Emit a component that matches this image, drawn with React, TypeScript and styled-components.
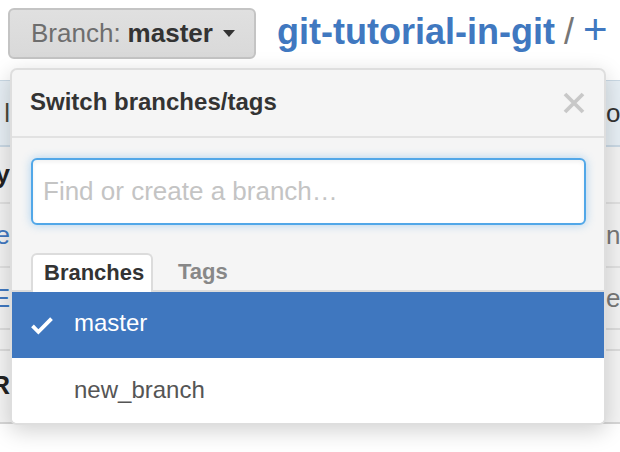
import React from "react";
import styled, { createGlobalStyle } from "styled-components";

const GlobalStyle = createGlobalStyle`
  html, body { margin: 0; padding: 0; background: #fff; }
  body { font-family: "Liberation Sans", Arial, Helvetica, sans-serif; }
  * { box-sizing: border-box; }
`;

const Page = styled.div`
  position: relative;
  width: 620px;
  height: 452px;
  overflow: hidden;
  background: #fff;
`;

const TopBar = styled.div`
  display: flex;
  align-items: center;
  gap: 21px;
  padding: 8px 0 0 8px;
  height: 59px;
`;

const BranchButton = styled.button`
  display: flex;
  align-items: center;
  width: 248px;
  height: 51px;
  padding: 0 0 0 21px;
  border: 2px solid #c4c4c4;
  border-radius: 6px;
  background: linear-gradient(#e0e0e0, #d9d9d9);
  font-family: inherit;
  font-size: 26px;
  color: #6e6e6e;
  white-space: nowrap;
`;

const Strong = styled.strong`
  color: #333;
  font-weight: 700;
  margin-left: 7px;
`;

const Caret = styled.span`
  display: inline-block;
  margin-left: 10px;
  width: 0;
  height: 0;
  border-top: 7px solid #333;
  border-left: 6.5px solid transparent;
  border-right: 6.5px solid transparent;
`;

const Title = styled.h1`
  display: flex;
  align-items: baseline;
  margin: -6px 0 0 0;
  font-size: 36px;
  line-height: 40px;
  font-weight: 700;
  color: #4078c0;
  white-space: nowrap;
`;

const Slash = styled.span`
  font-weight: 400;
  color: #767676;
  margin: 0 10px 0 9px;
`;

const Plus = styled.span`
  font-weight: 400;
  font-size: 42px;
  color: #4078c0;
  margin-left: -1px;
`;

const FileBox = styled.div`
  margin: 21px 0 0 -20px;
  width: 660px;
  border-top: 1px solid #c9d8e4;
  border-bottom: 2px solid #d6d6d6;
`;

const Row = styled.div<{ $h: number; $bg: string; $line: string }>`
  display: flex;
  align-items: center;
  height: ${(p) => p.$h}px;
  background: ${(p) => p.$bg};
  border-bottom: 2px solid ${(p) => p.$line};
  font-size: 26px;
`;

const LeftCell = styled.div<{ $color: string; $bold?: boolean }>`
  width: 30px;
  display: flex;
  justify-content: flex-end;
  overflow: hidden;
  white-space: nowrap;
  color: ${(p) => p.$color};
  font-weight: ${(p) => (p.$bold ? 700 : 400)};
`;

const Middle = styled.div`
  flex: 0 0 596px;
`;

const RightCell = styled.div<{ $color: string }>`
  flex: 1;
  white-space: nowrap;
  overflow: hidden;
  color: ${(p) => p.$color};
`;

const Dropdown = styled.div`
  position: absolute;
  left: 10px;
  top: 68px;
  width: 596px;
  height: 357px;
  display: flex;
  flex-direction: column;
  background: #f5f5f5;
  border: 2px solid #dedede;
  border-radius: 7px;
  overflow: hidden;
  box-shadow: 0 6px 22px rgba(0, 0, 0, 0.18);
`;

const Header = styled.div`
  display: flex;
  align-items: center;
  justify-content: space-between;
  height: 68px;
  padding: 0 19px 0 18px;
  border-bottom: 2px solid #e2e2e2;
  flex-shrink: 0;
`;

const HeaderTitle = styled.span`
  font-size: 24px;
  font-weight: 700;
  color: #333;
  margin-top: -2px;
`;

const CloseIcon = styled.svg`
  width: 22px;
  height: 22px;
  display: block;
`;

const FilterArea = styled.div`
  padding: 20px 19px 0 19px;
`;

const FilterInput = styled.input`
  display: block;
  width: 555px;
  height: 67px;
  padding: 0 10px;
  border: 2px solid #51a7e8;
  border-radius: 6px;
  background: #fff;
  outline: none;
  font-family: inherit;
  font-size: 26px;
  color: #333;
  box-shadow: 0 0 10px rgba(81, 167, 232, 0.45), inset 0 2px 4px rgba(0, 0, 0, 0.06);
  &::placeholder { color: #c4c4c4; }
`;

const Tabs = styled.div`
  display: flex;
  align-items: flex-end;
  margin-top: 28px;
  padding-left: 19px;
  height: 39px;
  border-bottom: 2px solid #dcdcdc;
  flex-shrink: 0;
`;

const Tab = styled.div<{ $active?: boolean }>`
  display: flex;
  align-items: center;
  height: ${(p) => (p.$active ? "39px" : "37px")};
  padding: 0 11px 2px;
  margin-bottom: ${(p) => (p.$active ? "-2px" : "0")};
  font-size: 22px;
  font-weight: 700;
  color: ${(p) => (p.$active ? "#333" : "#888")};
  background: ${(p) => (p.$active ? "#fff" : "transparent")};
  border: 2px solid ${(p) => (p.$active ? "#dcdcdc" : "transparent")};
  border-bottom: none;
  border-radius: 6px 6px 0 0;
  width: ${(p) => (p.$active ? "122px" : "auto")};
  margin-right: ${(p) => (p.$active ? "12px" : "0")};
`;

const List = styled.div`
  flex: 1;
  display: flex;
  flex-direction: column;
  background: #fff;
`;

const Item = styled.div<{ $selected?: boolean }>`
  display: flex;
  align-items: center;
  height: ${(p) => (p.$selected ? "66px" : "67px")};
  padding-left: 19px;
  background: ${(p) => (p.$selected ? "#3f77bf" : "#fff")};
  color: ${(p) => (p.$selected ? "#fff" : "#555")};
  font-size: 24px;
`;

const CheckSlot = styled.span`
  width: 43px;
  display: flex;
  align-items: center;
`;

const CheckIcon = styled.svg`
  width: 22px;
  height: 29px;
  display: block;
  margin-top: 1px;
`;

const ItemText = styled.span`
  margin-top: -4px;
`;

const rows = [
  { h: 66, bg: "#e6eef4", line: "#c9d8e4", left: "l", lc: "#4a4a3a", right: "os", rc: "#333" },
  { h: 57, bg: "#f2f2f2", line: "#e0e0e0", left: "y", lc: "#222", bold: true, right: "", rc: "#333" },
  { h: 64, bg: "#f2f2f2", line: "#e0e0e0", left: "ie", lc: "#4078c0", right: "n-", rc: "#777" },
  { h: 62, bg: "#f2f2f2", line: "#dcdcdc", left: "E", lc: "#4078c0", right: "en", rc: "#777" },
  { h: 21, bg: "#f2f2f2", line: "#dcdcdc", left: "", lc: "#333", right: "", rc: "#333" },
  { h: 71, bg: "#f4f4f4", line: "#f4f4f4", left: "R", lc: "#222", bold: true, right: "", rc: "#333" },
];

export default function App() {
  return (
    <>
      <GlobalStyle />
      <Page>
        <TopBar>
          <BranchButton>
            Branch:<Strong>master</Strong>
            <Caret />
          </BranchButton>
          <Title>
            git-tutorial-in-git<Slash>/</Slash>
            <Plus>+</Plus>
          </Title>
        </TopBar>

        <FileBox>
          {rows.map((r, i) => (
            <Row key={i} $h={r.h} $bg={r.bg} $line={r.line}>
              <LeftCell $color={r.lc} $bold={r.bold}>
                {r.left}
              </LeftCell>
              <Middle />
              <RightCell $color={r.rc}>{r.right}</RightCell>
            </Row>
          ))}
        </FileBox>

        <Dropdown>
          <Header>
            <HeaderTitle>Switch branches/tags</HeaderTitle>
            <CloseIcon viewBox="0 0 22 22">
              <path d="M2 2 L20 20 M20 2 L2 20" stroke="#c8c8c8" strokeWidth="3.8" fill="none" />
            </CloseIcon>
          </Header>
          <FilterArea>
            <FilterInput placeholder="Find or create a branch…" />
          </FilterArea>
          <Tabs>
            <Tab $active>Branches</Tab>
            <Tab>Tags</Tab>
          </Tabs>
          <List>
            <Item $selected>
              <CheckSlot>
                <CheckIcon viewBox="0 0 12 16">
                  <path d="M12 5l-8 8-4-4 1.5-1.5L4 10l6.5-6.5L12 5z" fill="#fff" />
                </CheckIcon>
              </CheckSlot>
              <ItemText>master</ItemText>
            </Item>
            <Item>
              <CheckSlot />
              <ItemText>new_branch</ItemText>
            </Item>
          </List>
        </Dropdown>
      </Page>
    </>
  );
}
